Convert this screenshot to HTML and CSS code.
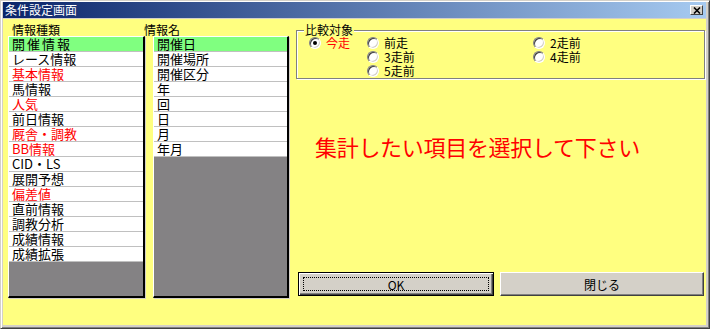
FILE: index.html
```html
<!DOCTYPE html>
<html>
<head>
  <meta charset="utf-8">
  <title>条件設定画面</title>
  <link rel="stylesheet" href="styles.css">
</head>
<body>
  <div class="window">
    <!--titlebar-->
    <div class="titlebar">
      <span class="title">条件設定画面</span>
      <span class="close">
        <svg width="8" height="7" viewBox="0 0 8 7"><path d="M1 0.5 L7 6.5 M7 0.5 L1 6.5" stroke="#000" stroke-width="1.6" fill="none"/></svg>
      </span>
    </div>
    <!--client-->
    <div class="client">
      <div class="col col-kind">
        <div class="label">情報種類</div>
        <div class="listbox">
          <div class="item sel wide">開催情報</div>
          <div class="item">レース情報</div>
          <div class="item red">基本情報</div>
          <div class="item">馬情報</div>
          <div class="item red">人気</div>
          <div class="item">前日情報</div>
          <div class="item red">厩舎・調教</div>
          <div class="item red">BB情報</div>
          <div class="item">CID・LS</div>
          <div class="item">展開予想</div>
          <div class="item red">偏差値</div>
          <div class="item">直前情報</div>
          <div class="item">調教分析</div>
          <div class="item">成績情報</div>
          <div class="item">成績拡張</div>
        </div>
      </div>
      <div class="col col-name">
        <div class="label">情報名</div>
        <div class="listbox">
          <div class="item sel">開催日</div>
          <div class="item">開催場所</div>
          <div class="item">開催区分</div>
          <div class="item">年</div>
          <div class="item">回</div>
          <div class="item">日</div>
          <div class="item">月</div>
          <div class="item">年月</div>
        </div>
      </div>
      <div class="panel">
        <fieldset class="group">
          <legend>比較対象</legend>
          <div class="radios">
            <label class="radio checked"><span class="dot"></span><span class="red">今走</span></label>
            <label class="radio"><span class="dot"></span>前走</label>
            <label class="radio"><span class="dot"></span>2走前</label>
            <span></span>
            <label class="radio"><span class="dot"></span>3走前</label>
            <label class="radio"><span class="dot"></span>4走前</label>
            <span></span>
            <label class="radio"><span class="dot"></span>5走前</label>
          </div>
        </fieldset>
        <div class="message">集計したい項目を選択して下さい</div>
        <div class="buttons">
          <button class="btn btn-ok"><span class="focus">OK</span></button>
          <button class="btn btn-close">閉じる</button>
        </div>
      </div>
    </div>
  </div>
</body>
</html>
```

FILE: styles.css
```css
html, body {
  margin: 0;
  padding: 0;
  background-color: #d4d0c8;
  font-family: "Noto Sans CJK JP", sans-serif;
}
.window {
  width: 710px;
  height: 329px;
  box-sizing: border-box;
  padding: 1px 3px 3px 2px;
  background-color: #d4d0c8;
  border: 1px solid;
  border-color: #d4d0c8 #404040 #404040 #d4d0c8;
  box-shadow: inset 1px 1px #fff, inset -1px -1px #808080;
  display: flex;
  flex-direction: column;
}
/* titlebar */
.titlebar {
  height: 16px;
  margin-bottom: 1px;
  display: flex;
  align-items: center;
  background: linear-gradient(to right, #0a246a, #a6caf0);
}
.title {
  color: #fff;
  font-size: 12px;
  line-height: 16px;
  padding-left: 2px;
}
.close {
  margin-left: auto;
  margin-right: 3px;
  width: 13px;
  height: 10px;
  box-sizing: border-box;
  background-color: #d4d0c8;
  border: 1px solid;
  border-color: #fff #404040 #404040 #fff;
  display: flex;
  align-items: center;
  justify-content: center;
}
.close svg {
  display: block;
}
/* client */
.client {
  flex: 1;
  display: flex;
  background-color: #ffff80;
  padding-left: 5px;
}
.col {
  display: flex;
  flex-direction: column;
}
.col-kind {
  width: 137px;
  margin-right: 8px;
}
.col-name {
  width: 136px;
  margin-right: 7px;
}
.label {
  height: 17px;
  box-sizing: border-box;
  padding: 4px 0 0 4px;
  font-size: 12px;
  line-height: 14px;
  color: #000;
  white-space: nowrap;
}
.col-name .label {
  margin-left: -13px;
}
.listbox {
  height: 262px;
  box-sizing: border-box;
  background-color: #848284;
  border-style: solid;
  border-width: 1px 2px 2px 1px;
  border-color: #fff #000 #000 #fff;
  box-shadow: 1px 1px #d4d0c8;
}
.item {
  height: 14px;
  line-height: 14px;
  font-size: 13px;
  padding-left: 3px;
  background-color: #fff;
  border-bottom: 1px solid #c0c0c0;
  color: #000;
  white-space: nowrap;
}
.item.sel {
  background-color: #80ff80;
}
.item.wide {
  letter-spacing: 2px;
}
.red {
  color: #ff0000;
}
.item.red {
  color: #ff0000;
}
/* panel */
.panel {
  width: 409px;
  display: flex;
  flex-direction: column;
  padding-bottom: 29px;
}
.group {
  margin: 5px 0 0 0;
  padding: 0 0 0 12px;
  border: 1px solid #808080;
  box-shadow: inset 1px 1px #fff, 1px 1px #fff;
}
.group legend {
  font-size: 12px;
  line-height: 12px;
  padding: 0 1px;
  margin-left: -5px;
  background-color: #ffff80;
}
.radios {
  display: grid;
  grid-template-columns: 58px 166px auto;
  grid-auto-rows: 14px;
  font-size: 12px;
}
.radio {
  display: flex;
  align-items: center;
  gap: 5px;
  line-height: 14px;
  white-space: nowrap;
}
.dot {
  width: 12px;
  height: 12px;
  box-sizing: border-box;
  border-radius: 50%;
  background-color: #fff;
  border: 1px solid;
  border-color: #808080 #fff #fff #808080;
  box-shadow: inset 1px 1px #404040, inset -1px -1px #d4d0c8;
  display: flex;
  align-items: center;
  justify-content: center;
}
.radio.checked .dot:after {
  content: "";
  width: 4px;
  height: 4px;
  border-radius: 50%;
  background-color: #000;
}
.message {
  margin: 54px 0 0 19px;
  font-size: 22px;
  line-height: 26px;
  color: #ff0000;
  letter-spacing: -0.3px;
  white-space: nowrap;
}
.buttons {
  margin-top: auto;
  display: flex;
  gap: 6px;
  padding-left: 2px;
}
.btn {
  height: 24px;
  box-sizing: border-box;
  background-color: #d4d0c8;
  font-family: "Noto Sans CJK JP", sans-serif;
  font-size: 12px;
  color: #000;
  padding: 0;
  border: 1px solid;
  border-color: #fff #404040 #404040 #fff;
  box-shadow: inset -1px -1px #808080;
  display: flex;
  align-items: center;
  justify-content: center;
}
.btn-ok {
  width: 196px;
  border: 1px solid #000;
  box-shadow: inset 1px 1px #fff, inset -1px -1px #404040, inset -2px -2px #808080;
  padding: 4px;
}
.btn-ok .focus {
  flex: 1;
  align-self: stretch;
  border: 1px dotted #000;
  display: flex;
  align-items: center;
  justify-content: center;
}
.btn-close {
  width: 204px;
}
```
